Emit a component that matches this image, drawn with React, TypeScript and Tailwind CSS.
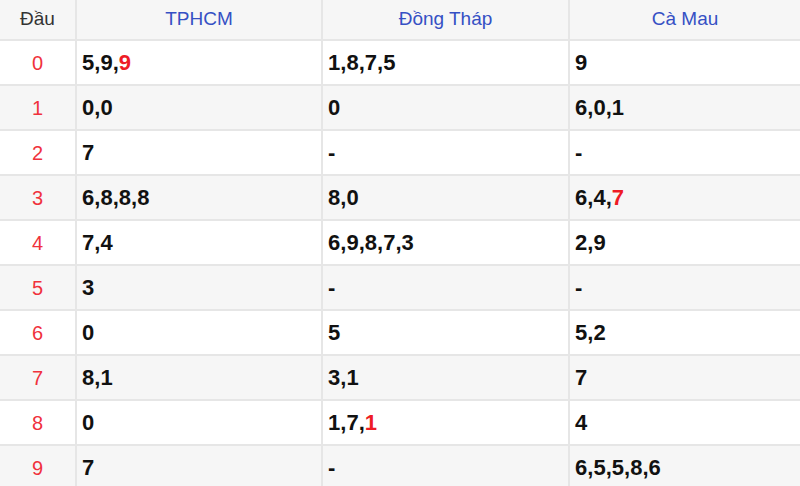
type Part = { v: string; hot?: boolean };

const provinces = ["TPHCM", "Đồng Tháp", "Cà Mau"];

// each cell: list of digits, marked "hot" when shown in red
const rows: Part[][][] = [
  [[{ v: "5" }, { v: "9" }, { v: "9", hot: true }], [{ v: "1" }, { v: "8" }, { v: "7" }, { v: "5" }], [{ v: "9" }]],
  [[{ v: "0" }, { v: "0" }], [{ v: "0" }], [{ v: "6" }, { v: "0" }, { v: "1" }]],
  [[{ v: "7" }], [], []],
  [[{ v: "6" }, { v: "8" }, { v: "8" }, { v: "8" }], [{ v: "8" }, { v: "0" }], [{ v: "6" }, { v: "4" }, { v: "7", hot: true }]],
  [[{ v: "7" }, { v: "4" }], [{ v: "6" }, { v: "9" }, { v: "8" }, { v: "7" }, { v: "3" }], [{ v: "2" }, { v: "9" }]],
  [[{ v: "3" }], [], []],
  [[{ v: "0" }], [{ v: "5" }], [{ v: "5" }, { v: "2" }]],
  [[{ v: "8" }, { v: "1" }], [{ v: "3" }, { v: "1" }], [{ v: "7" }]],
  [[{ v: "0" }], [{ v: "1" }, { v: "7" }, { v: "1", hot: true }], [{ v: "4" }]],
  [[{ v: "7" }], [], [{ v: "6" }, { v: "5" }, { v: "5" }, { v: "8" }, { v: "6" }]],
];

function Cell({ parts }: { parts: Part[] }) {
  if (parts.length === 0) return <>-</>;
  return (
    <>
      {parts.map((p, i) => (
        <span key={i}>
          {i > 0 && ","}
          <span className={p.hot ? "text-[#ee1c25]" : ""}>{p.v}</span>
        </span>
      ))}
    </>
  );
}

export default function App() {
  return (
    <div className="w-[800px] h-[486px] overflow-hidden bg-white font-['Liberation_Sans',Arial,sans-serif]">
      <table className="w-full table-fixed border-collapse">
        <colgroup>
          <col className="w-[76px]" />
          <col className="w-[246px]" />
          <col className="w-[247px]" />
          <col />
        </colgroup>
        <thead>
          <tr className="h-[40px] bg-[#f6f6f6]">
            <th className="border-2 border-t-0 border-l-0 border-[#e6e6e6] text-center text-[19px] font-normal text-[#333]">
              Đầu
            </th>
            {provinces.map((p) => (
              <th
                key={p}
                className="border-2 border-t-0 border-[#e6e6e6] last:border-r-0 text-center text-[19px] font-normal text-[#3550c4]"
              >
                {p}
              </th>
            ))}
          </tr>
        </thead>
        <tbody>
          {rows.map((cells, i) => (
            <tr key={i} className={`h-[45px] ${i % 2 === 1 ? "bg-[#f6f6f6]" : "bg-white"}`}>
              <td className="border-2 border-l-0 border-[#e6e6e6] text-center text-[20px] text-[#f0323c]">
                {i}
              </td>
              {cells.map((parts, j) => (
                <td
                  key={j}
                  className="border-2 border-[#e6e6e6] last:border-r-0 pl-[5px] text-[22px] font-bold text-[#111]"
                >
                  <Cell parts={parts} />
                </td>
              ))}
            </tr>
          ))}
        </tbody>
      </table>
    </div>
  );
}
